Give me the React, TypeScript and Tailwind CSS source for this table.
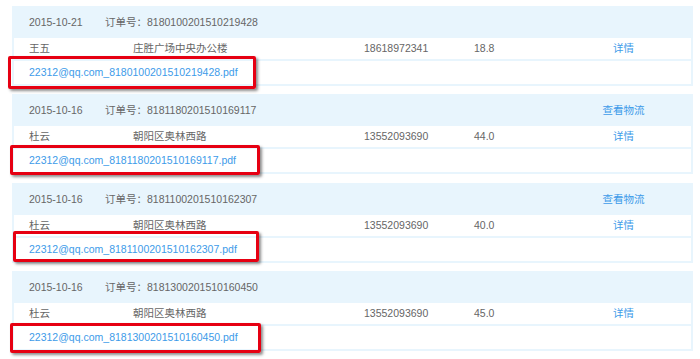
import { useState } from 'react';

interface Order {
  date: string;
  orderNo: string;
  name: string;
  address: string;
  phone: string;
  amount: string;
  logistics?: boolean;
  gap: string;
  box: string;
}

const orders: Order[] = [
  {
    date: '2015-10-21',
    orderNo: '8180100201510219428',
    name: '王五',
    address: '庄胜广场中央办公楼',
    phone: '18618972341',
    amount: '18.8',
    gap: 'mt-0',
    box: 'top-[50px] left-[-4px] w-[248px] h-[33px]',
  },
  {
    date: '2015-10-16',
    orderNo: '8181180201510169117',
    name: '杜云',
    address: '朝阳区奥林西路',
    phone: '13552093690',
    amount: '44.0',
    logistics: true,
    gap: 'mt-[8px]',
    box: 'top-[51px] left-[-2px] w-[250px] h-[30px]',
  },
  {
    date: '2015-10-16',
    orderNo: '8181100201510162307',
    name: '杜云',
    address: '朝阳区奥林西路',
    phone: '13552093690',
    amount: '40.0',
    logistics: true,
    gap: 'mt-[9px]',
    box: 'top-[48px] left-[1px] w-[246px] h-[31px]',
  },
  {
    date: '2015-10-16',
    orderNo: '8181300201510160450',
    name: '杜云',
    address: '朝阳区奥林西路',
    phone: '13552093690',
    amount: '45.0',
    gap: 'mt-[8px]',
    box: 'top-[52px] left-[-2px] w-[251px] h-[30px]',
  },
];

function OrderCard({ order }: { order: Order }) {
  const [hover, setHover] = useState(false);
  const file = `22312@qq.com_${order.orderNo}.pdf`;

  return (
    <div className={`relative ${order.gap} flex h-[80px] flex-col bg-[#e8f5fd] px-[2px] pb-[2px]`}>
      <div className="flex h-[32px] items-center pl-[15px] text-[#666]">
        <span className="w-[76px]">{order.date}</span>
        <span className="w-[469px]">订单号：{order.orderNo}</span>
        <span className="w-[99px] text-center">
          {order.logistics && <a className="cursor-pointer text-[#3d9be9]">查看物流</a>}
        </span>
      </div>
      <div className="flex h-[21px] items-center bg-white pl-[15px] text-[#666]">
        <span className="w-[104px]">{order.name}</span>
        <span className="w-[231px]">{order.address}</span>
        <span className="w-[110px]">{order.phone}</span>
        <span className="w-[100px]">{order.amount}</span>
        <span className="w-[99px] text-center">
          <a className="cursor-pointer text-[#3d9be9]">详情</a>
        </span>
      </div>
      <div className="mt-[2px] flex h-[23px] items-center bg-white pl-[15px]">
        <a
          className={`cursor-pointer text-[#3d9be9] ${hover ? 'underline' : ''}`}
          onMouseEnter={() => setHover(true)}
          onMouseLeave={() => setHover(false)}
        >
          {file}
        </a>
      </div>
      <div
        className={`pointer-events-none absolute ${order.box} rounded-[2px] border-[3px] border-[#e60012] shadow-[2px_2px_3px_rgba(0,0,0,0.45)]`}
      />
    </div>
  );
}

export default function App() {
  return (
    <div
      className="min-h-[359px] w-[700px] bg-white pt-[6px] pl-[12px] pr-[7px] text-[10.5px] leading-none"
      style={{ fontFamily: '"Liberation Sans", "Noto Sans CJK SC", sans-serif' }}
    >
      <div className="flex flex-col">
        {orders.map((order) => (
          <OrderCard key={order.orderNo} order={order} />
        ))}
      </div>
    </div>
  );
}
